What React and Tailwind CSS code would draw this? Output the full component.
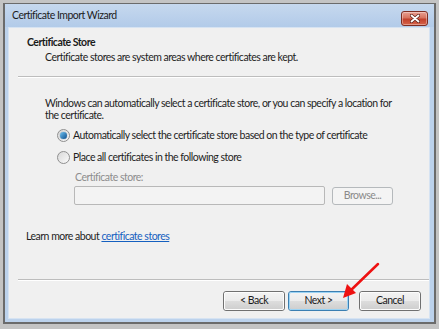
import React from "react";

function Radio({ checked }) {
    return (
        <span className="relative flex h-[13px] w-[13px] shrink-0 items-center justify-center rounded-full border border-[#8f8f8f] bg-gradient-to-br from-[#d8d8d8] to-[#fbfbfb]">
            {checked && <span className="h-[7px] w-[7px] rounded-full bg-gradient-to-br from-[#6fc3f2] to-[#0b4f8e] shadow-[0_0_1px_#1a4f7a]" />}
        </span>
    );
}

function WinButton({ children, focused, disabled, className = "" }) {
    if (disabled) {
        return (
            <div className={`flex items-center justify-center rounded-[3px] border border-[#b5b9bc] bg-[#f4f4f4] text-[#8a8a8a] ${className}`}>
                {children}
            </div>
        );
    }
    return (
        <div className={`rounded-[3px] border ${focused ? "border-[#3c7fb1]" : "border-[#707070]"} ${className}`}>
            <div className={`flex h-full w-full items-center justify-center rounded-[2px] border ${focused ? "border-[#9bd3f4]" : "border-[#fcfcfc]"} bg-[linear-gradient(to_bottom,#f2f2f2_0%,#ebebeb_50%,#dddddd_51%,#cfcfcf_100%)] text-[#1a1a1a]`}>
                {children}
            </div>
        </div>
    );
}

export default function App() {
    return (
        <div className="h-[329px] w-[439px] bg-[#c4c4c4] pl-[3px] pr-[3px] pt-[3px] pb-[5px] text-[10.5px] tracking-[-0.5px] text-[#1e1e1e]" style={{ fontFamily: 'Lato, "Noto Sans", sans-serif' }}>
            <div className="relative flex h-full flex-col border border-[#6b6b6b] border-l-2 border-r-2 border-b-2 bg-[#bcd2ec]">
                {/* title bar */}
                <div className="flex h-[23px] shrink-0 items-center justify-between bg-[linear-gradient(to_bottom,#c6d8ee,#b2cbe9)] pl-[7px] pr-[6px]">
                    <span className="text-[10.5px] text-[#1c1c1c]">Certificate Import Wizard</span>
                    <div className="mt-[5px] flex h-[15px] w-[27px] items-center justify-center rounded-[3px] border border-[#7e2d22] bg-[linear-gradient(to_bottom,#e8a092_0%,#d7735f_45%,#c2412c_55%,#d7644a_100%)] shadow-[inset_0_0_0_1px_rgba(255,255,255,0.35)]">
                        <svg width="10" height="9" viewBox="0 0 10 9">
                            <path d="M1.5 1.5 L8.5 7.5 M8.5 1.5 L1.5 7.5" stroke="#5a1e16" strokeWidth="3.2" strokeLinecap="round" />
                            <path d="M1.5 1.5 L8.5 7.5 M8.5 1.5 L1.5 7.5" stroke="#ffffff" strokeWidth="1.8" strokeLinecap="round" />
                        </svg>
                    </div>
                </div>

                {/* content */}
                <div className="mb-[3px] ml-[3px] mr-[4px] flex flex-1 flex-col border border-[#d6e3f2] bg-[#f0f0f0]">
                    <div className="pl-[18px] pt-[7px]">
                        <div className="font-bold leading-[15px] text-[#1a1a1a]">Certificate Store</div>
                        <div className="pl-[18px] leading-[15px]">Certificate stores are system areas where certificates are kept.</div>
                    </div>
                    <div className="ml-[9px] mr-[9px] mt-[11px] h-[2px] border-t border-b border-t-[#bdbdbd] border-b-[#ffffff]" />

                    <div className="pl-[36px] pt-[19px] pr-[10px] leading-[12px]">
                        Windows can automatically select a certificate store, or you can specify a location for
                        <br />
                        the certificate.
                    </div>

                    <div className="mt-[6px] flex items-center gap-[3px] pl-[48px] leading-[16px]">
                        <Radio checked />
                        <span>Automatically select the certificate store based on the type of certificate</span>
                    </div>
                    <div className="mt-[6px] flex items-center gap-[3px] pl-[48px] leading-[16px]">
                        <Radio />
                        <span>Place all certificates in the following store</span>
                    </div>

                    <div className="mt-[4px] pl-[66px] leading-[16px] text-[#8d8d8d]">Certificate store:</div>
                    <div className="mt-[1px] flex items-center pl-[65px]">
                        <div className="h-[19px] w-[251px] rounded-[2px] border border-[#b8b8b8] bg-[#f3f3f3]" />
                        <WinButton disabled className="ml-[7px] h-[18px] w-[61px]">Browse...</WinButton>
                    </div>

                    <div className="mt-[23px] pl-[17px] leading-[16px]">
                        Learn more about <span className="text-[#1560c0] underline">certificate stores</span>
                    </div>

                    <div className="mt-auto ml-[9px] h-[2px] border-t border-b border-t-[#bdbdbd] border-b-[#ffffff]" />

                    <div className="mt-[10px] mb-[7px] flex pl-[214px]">
                        <WinButton className="h-[20px] w-[62px]">&lt; Back</WinButton>
                        <WinButton focused className="ml-[3px] h-[20px] w-[61px]">Next &gt;</WinButton>
                        <WinButton className="ml-[10px] h-[20px] w-[62px]">Cancel</WinButton>
                    </div>
                </div>

                {/* annotation arrow */}
                <svg className="pointer-events-none absolute left-0 top-0" width="435" height="325" viewBox="0 0 435 325">
                    <path d="M373 260 L344 288" stroke="#ee1111" strokeWidth="2.5" strokeLinecap="round" />
                    <path d="M338 294 L342 280 L351 289 Z" fill="#ee1111" />
                </svg>
            </div>
        </div>
    );
}
